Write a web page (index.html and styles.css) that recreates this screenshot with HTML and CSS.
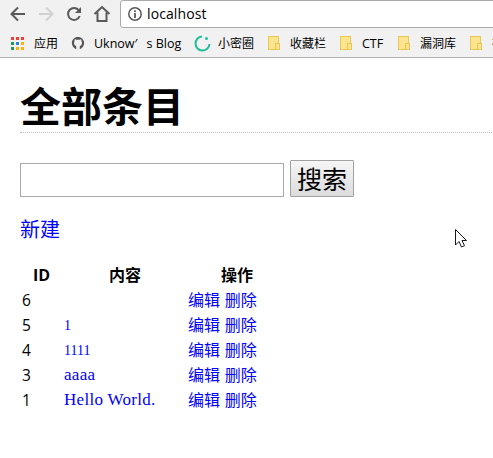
FILE: index.html
```html
<!DOCTYPE html>
<html lang="zh-CN">
<head>
<meta charset="utf-8">
<title>全部条目</title>
<link rel="stylesheet" href="styles.css">
</head>
<body>
<header class="browser">
  <div class="toolbar">
    <svg class="nav" width="112" height="28" viewBox="0 0 112 28" fill="none" stroke="#5a5a5a" stroke-width="2">
      <path d="M25 14H12M18 7.5L11.5 14L18 20.5"/>
      <path stroke="#d2d2d2" d="M39 14H52M46 7.500L52.500 14L46 20.500"/>
      <path d="M79 10.500A6 6 0 1 0 79.700 16"/><path d="M81 7V13H75Z" fill="#5a5a5a" stroke="none"/>
      <path d="M94.500 14L102 7L109.500 14M97.500 12.500V21H106.500V12.500"/>
    </svg>
    <div class="address">
      <svg width="16" height="16" viewBox="0 0 16 16"><circle cx="8" cy="8" r="6.200" fill="none" stroke="#5a5a5a" stroke-width="1.500"/><path d="M7.100 4.300H8.900V6H7.100ZM7.100 7H8.900V12H7.100Z" fill="#5a5a5a"/></svg>
      <span class="url">localhost</span>
    </div>
  </div>
  <nav class="bookmarks">
    <span class="bookmark apps">
      <svg width="13" height="13" viewBox="0 0 13 13"><path fill="#ee4035" d="M0 0h3v3H0zM5 0h3v3H5zM10 0h3v3h-3z"/><path fill="#249b55" d="M0 5h3v3H0zM0 10h3v3H0z"/><path fill="#2687e8" d="M5 5h3v3H5z"/><path fill="#f9b40b" d="M10 5h3v3h-3zM5 10h3v3H5zM10 10h3v3h-3z"/></svg>
      <span>应用</span>
    </span>
    <span class="bookmark blog">
      <svg width="14" height="14" viewBox="0 0 16 16"><path fill="#555" d="M8 1C3.900 1 1 4 1 8c0 3.200 2 6 5 7v-3.200c-.8-.8-2.600-1.200-2.600-4 0-1 .3-1.600.8-2.200-.2-.7-.1-1.400.2-2 .8 0 1.500.4 2 .8h3.200c.5-.4 1.200-.8 2-.8.3.6.4 1.300.2 2 .5.6.8 1.200.8 2.200 0 2.800-1.800 3.200-2.600 4V15c3-1 5-3.800 5-7 0-4-2.900-7-7-7z"/></svg>
      <span class="latin">Uknow<span class="apostrophe">′</span>s Blog</span>
    </span>
    <span class="bookmark circle">
      <svg width="17" height="17" viewBox="0 0 17 17"><path d="M8 1.500A7 7 0 1 0 15.500 9" fill="none" stroke="#24bd9b" stroke-width="2"/><circle cx="12.500" cy="3.500" r="1.500" fill="#24bd9b"/></svg>
      <span>小密圈</span>
    </span>
    <span class="bookmark favorites"><i class="folder"></i><span>收藏栏</span></span>
    <span class="bookmark ctf"><i class="folder"></i><span class="latin">CTF</span></span>
    <span class="bookmark vulns"><i class="folder"></i><span>漏洞库</span></span>
    <span class="bookmark more"><i class="folder"></i><span>社</span></span>
  </nav>
</header>
<main>
  <h1>全部条目</h1>
  <form class="search"><input type="text" aria-label="搜索"><button type="button">搜索</button></form>
  <a class="new" href="#">新建</a>
  <table>
    <thead><tr><th class="id">ID</th><th class="content">内容</th><th class="actions">操作</th></tr></thead>
    <tbody>
      <tr><td>6</td><td></td><td><a href="#">编辑</a> <a href="#">删除</a></td></tr>
      <tr><td>5</td><td><a class="entry number" href="#">1</a></td><td><a href="#">编辑</a> <a href="#">删除</a></td></tr>
      <tr><td>4</td><td><a class="entry number" href="#">1111</a></td><td><a href="#">编辑</a> <a href="#">删除</a></td></tr>
      <tr><td>3</td><td><a class="entry" href="#">aaaa</a></td><td><a href="#">编辑</a> <a href="#">删除</a></td></tr>
      <tr><td>1</td><td><a class="entry" href="#">Hello World.</a></td><td><a href="#">编辑</a> <a href="#">删除</a></td></tr>
    </tbody>
  </table>
</main>
<svg class="cursor" width="14" height="21" viewBox="0 0 14 21"><path d="M1.500 1.500V17L5 13.500L7.500 19L10.500 17.700L8 12.500H12.500Z" fill="#fff" stroke="#151525"/></svg>
</body>
</html>
```
FILE: styles.css
```css
* { box-sizing: border-box; }
body {
  margin: 0;
  height: 458px;
  overflow: hidden;
  background: #fff;
  color: #000;
  font-family: "Open Sans", "Noto Sans CJK SC", sans-serif;
}
a { color: #00f; text-decoration: none; }
.browser { height: 58px; background: #f1f1f1; border-bottom: 1px solid #b3b3b3; overflow: hidden; }
.toolbar { display: flex; height: 28px; }
.nav { flex: none; margin-right: 8px; }
.address {
  display: flex;
  flex: none;
  align-items: center;
  width: 390px;
  height: 28px;
  padding-left: 6px;
  background: #fff;
  border: 1px solid #a9a9a9;
  border-radius: 3px 0 0 3px;
}
.url { margin-left: 4px; font-size: 14px; line-height: 20px; letter-spacing: .1px; }
.bookmarks { display: flex; height: 29px; padding-left: 11px; font-size: 12px; line-height: 18px; }
.bookmark { display: flex; flex: none; align-items: center; height: 30px; white-space: nowrap; }
.bookmark > span { position: relative; top: 1px; }
.bookmark svg { flex: none; }
.apps { width: 60px; gap: 10px; }
.blog { width: 123px; gap: 9px; }
.circle { width: 74px; gap: 7px; }
.favorites { width: 72px; }
.ctf { width: 58px; }
.vulns { width: 72px; }
.folder { position: relative; flex: none; width: 11px; height: 14px; margin-right: 11px; background: #ffe48f; border: 1px solid #eac653; }
.folder::after { content: ""; position: absolute; right: -2px; bottom: -1px; width: 3px; height: 5px; background: #ffe48f; border: 1px solid #eac653; }
.latin { font-size: 12.500px; }
.apostrophe { display: inline-block; width: 12px; }
main { margin: 0 0 0 20px; }
h1 { width: 472px; height: 75px; margin: 0; padding-top: 18px; border-bottom: 1px dotted #bbb; font-size: 41px; line-height: 60px; font-weight: 700; }
.search { display: flex; align-items: flex-end; gap: 6px; height: 37px; margin: 27px 0 0; }
input { width: 264px; height: 34px; padding: 0 4px; border: 1px solid #a9a9a9; font-size: 24px; }
button { width: 64px; height: 37px; padding: 0; border: 1px solid #a2a2a2; border-radius: 1px; background: linear-gradient(#f6f6f6, #dcdcdc); color: #000; font: 25px/33px "Noto Sans CJK SC", sans-serif; }
.new { display: block; margin-top: 18px; height: 30px; font-size: 20px; line-height: 30px; }
table { width: 278px; margin-top: 17px; border-collapse: collapse; table-layout: fixed; font-size: 16px; line-height: 24px; }
th, td { height: 25px; padding: 0; text-align: left; vertical-align: middle; white-space: nowrap; }
th { font-weight: 700; font-size: 16px; }
.id { width: 44px; padding-left: 13px; }
.content { width: 124px; padding-left: 45px; }
.actions { padding-left: 33px; }
td:first-child { padding-left: 2px; font-size: 15.500px; }
td:last-child { font-size: 16px; word-spacing: .5px; }
tr { height: 25px; }
.entry { display: block; font-family: "Liberation Serif", serif; font-size: 17px; line-height: 24px; letter-spacing: .3px; }
.number { padding-top: 1px; font-size: 14px; line-height: 23px; letter-spacing: 0; }
.cursor { position: absolute; left: 454px; top: 228px; }
```
